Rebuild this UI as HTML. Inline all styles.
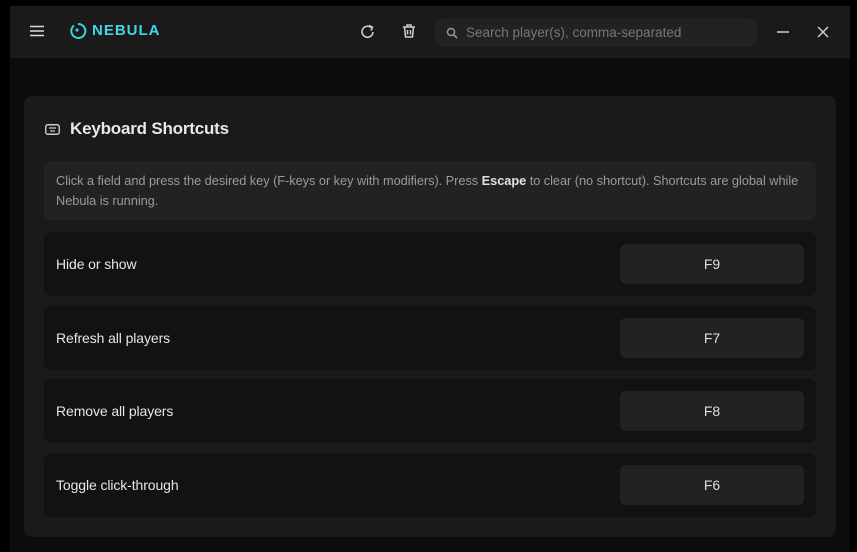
<!DOCTYPE html>
<html><head><style>
*{margin:0;padding:0;box-sizing:border-box}
body{width:857px;height:552px;background:#000;font-family:"Liberation Sans",sans-serif;position:relative;overflow:hidden}
.win{position:absolute;left:10px;top:6px;width:840px;height:546px;background:#0c0c0c}
.top{position:absolute;left:0;top:0;width:840px;height:52px;background:#1a1a1a}
.card{position:absolute;left:14px;top:90px;width:812px;height:441px;background:#1a1a1a;border-radius:8px}
.title{position:absolute;left:46px;top:23px;color:#e8e8e8;font-size:17px;font-weight:bold;letter-spacing:-0.2px}
.info{position:absolute;left:20px;top:65px;width:772px;height:59px;background:#222;border-radius:7px;color:#9a9a9a;font-size:12.8px;letter-spacing:-0.05px;line-height:20px;padding:10px 12px}
.info b{color:#e0e0e0}
.row{position:absolute;left:20px;width:772px;height:64px;background:#121212;border-radius:7px}
.row span{position:absolute;left:12px;top:24px;color:#e6e6e6;font-size:14px;letter-spacing:-0.1px}
.key{position:absolute;left:576px;top:12px;width:184px;height:40px;background:#222;border-radius:6px;color:#ddd;font-size:14px;text-align:center;line-height:40px}
.search{position:absolute;left:424px;top:12px;width:324px;height:29px;background:#222;border-radius:10px;color:#777;font-size:13.5px;line-height:29px;padding-left:32px}
</style></head><body>
<div class="win">
<div class="top">
<svg style="position:absolute;left:20px;top:19px" width="14" height="12"><path d="M0 1.5H14M0 6H14M0 10.5H14" stroke="#ddd" stroke-width="1.6"/></svg>
<svg style="position:absolute;left:59px;top:16px" width="18" height="18"><path d="M5 3.5A7 7 0 1 0 9 2" fill="none" stroke="#3ed0e0" stroke-width="2"/><circle cx="8" cy="8" r="1.6" fill="#3ed0e0"/></svg>
<div style="position:absolute;left:82px;top:16px;color:#45d4e6;font-weight:bold;font-size:15px;letter-spacing:1px">NEBULA</div>
<svg style="position:absolute;left:350px;top:18px" width="16" height="16"><path d="M13 8A5.5 5.5 0 1 1 11 3.5" fill="none" stroke="#ccc" stroke-width="1.6"/><path d="M9 1.5L12.5 3.2L11 6.5" fill="none" stroke="#ccc" stroke-width="1.6"/></svg>
<svg style="position:absolute;left:392px;top:18px" width="14" height="14"><path d="M1 3H13M5 3V1H9V3M2.5 3L3.5 13H10.5L11.5 3M5.5 6V10.5M8.5 6V10.5" fill="none" stroke="#ccc" stroke-width="1.5"/></svg>
<div class="search">Search player(s), comma-separated</div>
<svg style="position:absolute;left:436px;top:21px" width="12" height="12"><circle cx="5" cy="5" r="3.5" fill="none" stroke="#999" stroke-width="1.4"/><path d="M7.5 7.5L11 11" stroke="#999" stroke-width="1.6"/></svg>
<svg style="position:absolute;left:767px;top:20px" width="12" height="12"><path d="M0 6H12" stroke="#ccc" stroke-width="1.5"/></svg>
<svg style="position:absolute;left:807px;top:20px" width="12" height="12"><path d="M1 1L11 11M11 1L1 11" stroke="#ccc" stroke-width="1.5"/></svg>
</div>
<div class="card">
<svg style="position:absolute;left:21px;top:28px" width="15" height="11"><rect x=".75" y=".75" width="13.5" height="9.5" rx="2" fill="none" stroke="#ccc" stroke-width="1.4"/><path d="M4 4H11M5 7H10" stroke="#ccc" stroke-width="1.3"/></svg>
<div class="title">Keyboard Shortcuts</div>
<div class="info">Click a field and press the desired key (F-keys or key with modifiers). Press <b>Escape</b> to clear (no shortcut). Shortcuts are global while Nebula is running.</div>
<div class="row" style="top:136px"><span>Hide or show</span><div class="key">F9</div></div>
<div class="row" style="top:210px"><span>Refresh all players</span><div class="key">F7</div></div>
<div class="row" style="top:283px"><span>Remove all players</span><div class="key">F8</div></div>
<div class="row" style="top:357px"><span>Toggle click-through</span><div class="key">F6</div></div>
</div>
</div>
</body></html>
